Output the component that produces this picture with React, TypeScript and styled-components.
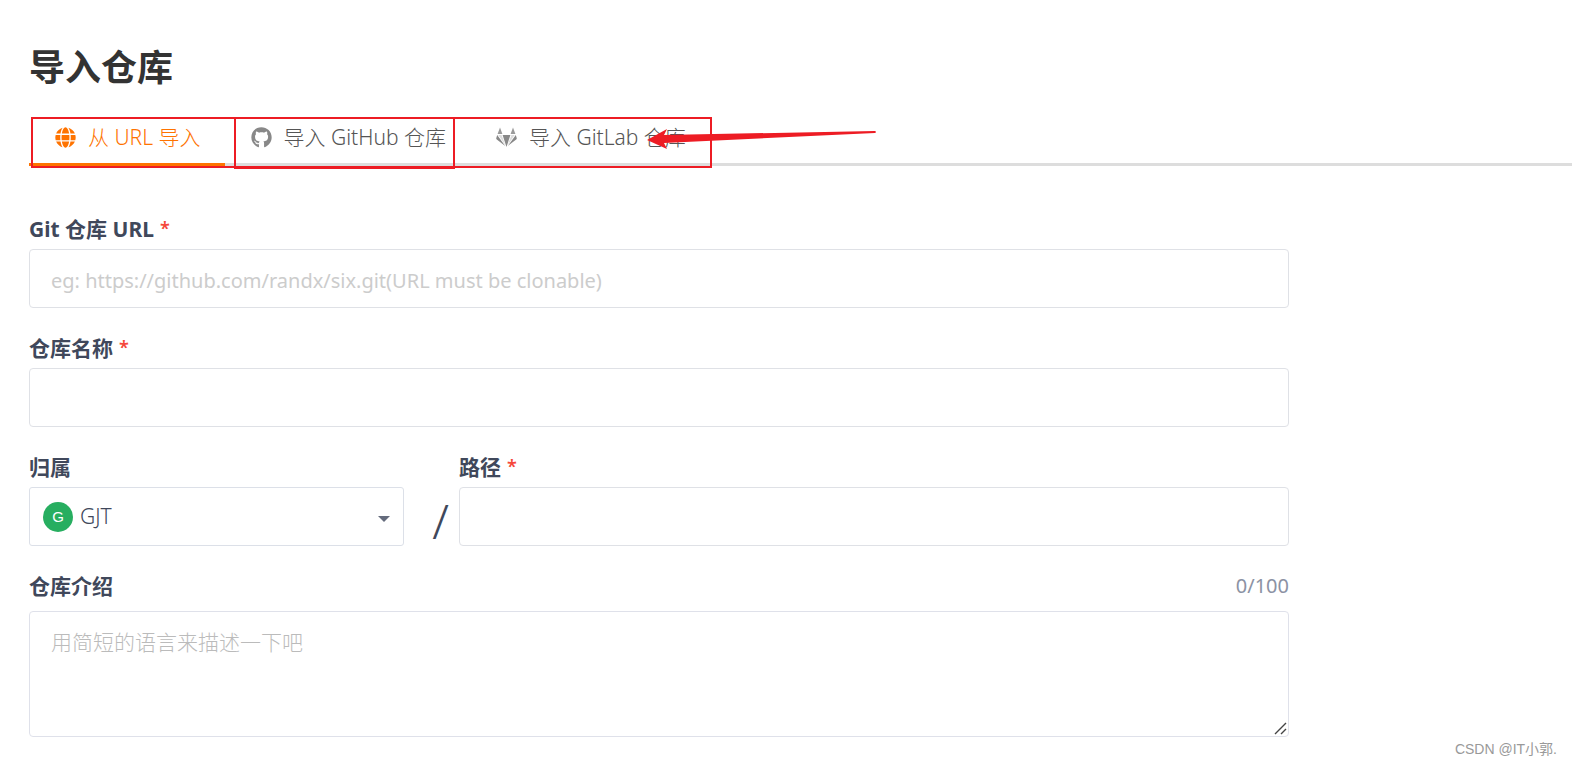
import React, { useState } from 'react';
import styled, { createGlobalStyle } from 'styled-components';
import { FaGithub, FaGlobe } from 'react-icons/fa';

const GlobalStyle = createGlobalStyle`
  *, *::before, *::after { box-sizing: border-box; }
  body {
    margin: 0;
    background: #fff;
    color: #40485b;
    font-family: "Noto Sans", "Noto Sans CJK SC", sans-serif;
    font-size: 21px;
    line-height: 28px;
  }
  input, select, textarea, button { font: inherit; color: inherit; }
`;

const Page = styled.main`
  position: relative;
  padding: 41px 0 28px 29px;
`;

const Title = styled.h1`
  margin: 0 0 21px;
  color: #333;
  font-size: 36px;
  line-height: 54px;
  font-weight: 700;
`;

const Tabs = styled.nav`
  position: relative;
  display: flex;
  height: 50px;
  border-bottom: 3px solid #ddd;
`;

const Tab = styled.a<{ $active?: boolean }>`
  display: flex;
  align-items: center;
  gap: 12px;
  height: 50px;
  padding: 0 24px 5px 26px;
  border-bottom: 3px solid ${(p) => (p.$active ? '#fe7300' : 'transparent')};
  color: ${(p) => (p.$active ? '#fe7300' : '#555')};
  font-weight: 300;
  text-decoration: none;
  white-space: nowrap;

  svg {
    width: 21px;
    height: 21px;
    color: ${(p) => (p.$active ? '#fe7300' : '#888')};
  }
`;

const Annotation = styled.svg`
  position: absolute;
  top: 0;
  left: 0;
  overflow: visible;
  pointer-events: none;
`;

const Form = styled.form`
  display: flex;
  flex-direction: column;
  gap: 26px;
  max-width: 1260px;
  margin-top: 49px;
`;

const Field = styled.div`
  display: flex;
  flex-direction: column;
  gap: 6px;
  min-width: 0;
`;

const DescriptionField = styled(Field)`
  gap: 11px;
`;

const LabelRow = styled.div`
  display: flex;
  justify-content: space-between;
`;

const Label = styled.label`
  height: 28px;
  font-weight: 700;
`;

const Required = styled.span`
  margin-left: 6px;
  color: #f5483b;
  font-size: 18px;
  font-weight: 600;
  line-height: 20px;
  vertical-align: 2px;
`;

const Counter = styled.span`
  color: #8c92a4;
  font-size: 20px;
`;

const Input = styled.input`
  width: 100%;
  height: 59px;
  padding: 4px 21px 0;
  border: 1px solid #dfe1e6;
  border-radius: 4px;
  background: #fff;
  font-size: 20px;
  outline: none;
  &::placeholder { color: #ccc; opacity: 1; }
`;

const PathRow = styled.div`
  display: grid;
  grid-template-columns: 375px 55px minmax(0, 1fr);
`;

const Slash = styled.span`
  align-self: end;
  padding-left: 18px;
  text-align: center;
  font-size: 48px;
  font-weight: 300;
  line-height: 50px;
`;

const SelectBox = styled.div`
  position: relative;
`;

const Select = styled.select`
  display: block;
  width: 100%;
  height: 59px;
  padding: 0 40px 2px 50px;
  border: 1px solid #dce0e8;
  border-radius: 3px;
  background: #fff;
  font-weight: 300;
  appearance: none;
  outline: none;
`;

const Avatar = styled.span`
  position: absolute;
  top: 15px;
  left: 14px;
  width: 30px;
  height: 30px;
  border-radius: 50%;
  background: #27ae60;
  color: #fff;
  font-family: "Liberation Sans", sans-serif;
  font-size: 15px;
  line-height: 30px;
  text-align: center;
  pointer-events: none;
`;

const Caret = styled.svg`
  position: absolute;
  top: 29px;
  right: 14px;
  pointer-events: none;
`;

const TextAreaBox = styled.div`
  position: relative;
`;

const TextArea = styled.textarea`
  display: block;
  width: 100%;
  height: 126px;
  padding: 16px 21px;
  border: 1px solid #dfe1ea;
  border-radius: 4px;
  outline: none;
  resize: vertical;
  &::placeholder { color: #bbb; font-weight: 300; opacity: 1; }
  &::-webkit-resizer { display: none; }
`;

const Grip = styled.svg`
  position: absolute;
  right: 2px;
  bottom: 2px;
  pointer-events: none;
`;

const Watermark = styled.footer`
  position: absolute;
  right: 15px;
  bottom: 6px;
  color: #999;
  font-family: "Liberation Sans", "Noto Sans CJK SC", sans-serif;
  font-size: 14px;
  line-height: 20px;
`;

const GitLabIcon = () => (
  <svg viewBox="0 0 21 21" fill="currentColor" aria-hidden="true">
    <path d="M4 0.5L6.4 7H1.6ZM17 0.5L19.4 7H14.6Z" opacity="0.85" />
    <path d="M1.2 8L9.2 19L0.8 12.6Q0 12 0.3 11ZM19.8 8L11.8 19L20.2 12.6Q21 12 20.7 11Z" />
    <path d="M6.6 8H14.4L10.5 20Z" />
    <path d="M2.4 8H5.6L9.2 18ZM18.6 8H15.4L11.8 18Z" opacity="0.3" />
  </svg>
);

export default function App() {
  const [intro, setIntro] = useState('');

  return (
    <>
      <GlobalStyle />
      <Page>
        <Title>导入仓库</Title>
        <Tabs>
          <Tab href="#url" $active>
            <FaGlobe />
            从 URL 导入
          </Tab>
          <Tab href="#github">
            <FaGithub />
            导入 GitHub 仓库
          </Tab>
          <Tab href="#gitlab">
            <GitLabIcon />
            导入 GitLab 仓库
          </Tab>
          <Annotation width="850" height="54" viewBox="0 0 850 54" aria-hidden="true">
            <g fill="none" stroke="#ed1c24" strokeWidth="2">
              <path d="M3 2H682V51H3Z" />
              <path d="M206 2H425V52H206Z" />
            </g>
            <path
              d="M618 24L638 13L635 19L846 15Q848 16 846 17L635 27L638 33Z"
              fill="#ed1c24"
            />
          </Annotation>
        </Tabs>

        <Form>
          <Field>
            <Label htmlFor="url">
              Git 仓库 URL<Required>*</Required>
            </Label>
            <Input
              id="url"
              placeholder="eg: https://github.com/randx/six.git(URL must be clonable)"
            />
          </Field>

          <Field>
            <Label htmlFor="name">
              仓库名称<Required>*</Required>
            </Label>
            <Input id="name" />
          </Field>

          <PathRow>
            <Field>
              <Label htmlFor="owner">归属</Label>
              <SelectBox>
                <Select id="owner">
                  <option>GJT</option>
                </Select>
                <Avatar>G</Avatar>
                <Caret width="12" height="6" viewBox="0 0 12 6">
                  <path d="M0 0H12L6 6Z" fill="#646b7c" />
                </Caret>
              </SelectBox>
            </Field>
            <Slash>/</Slash>
            <Field>
              <Label htmlFor="path">
                路径<Required>*</Required>
              </Label>
              <Input id="path" />
            </Field>
          </PathRow>

          <DescriptionField>
            <LabelRow>
              <Label htmlFor="intro">仓库介绍</Label>
              <Counter>{intro.length}/100</Counter>
            </LabelRow>
            <TextAreaBox>
              <TextArea
                id="intro"
                maxLength={100}
                placeholder="用简短的语言来描述一下吧"
                value={intro}
                onChange={(e) => setIntro(e.target.value)}
              />
              <Grip width="13" height="13" viewBox="0 0 13 13">
                <path d="M1 12L12 1M7 12L12 7" stroke="#444" strokeWidth="1.4" />
              </Grip>
            </TextAreaBox>
          </DescriptionField>
        </Form>

        <Watermark>CSDN @IT小郭.</Watermark>
      </Page>
    </>
  );
}
